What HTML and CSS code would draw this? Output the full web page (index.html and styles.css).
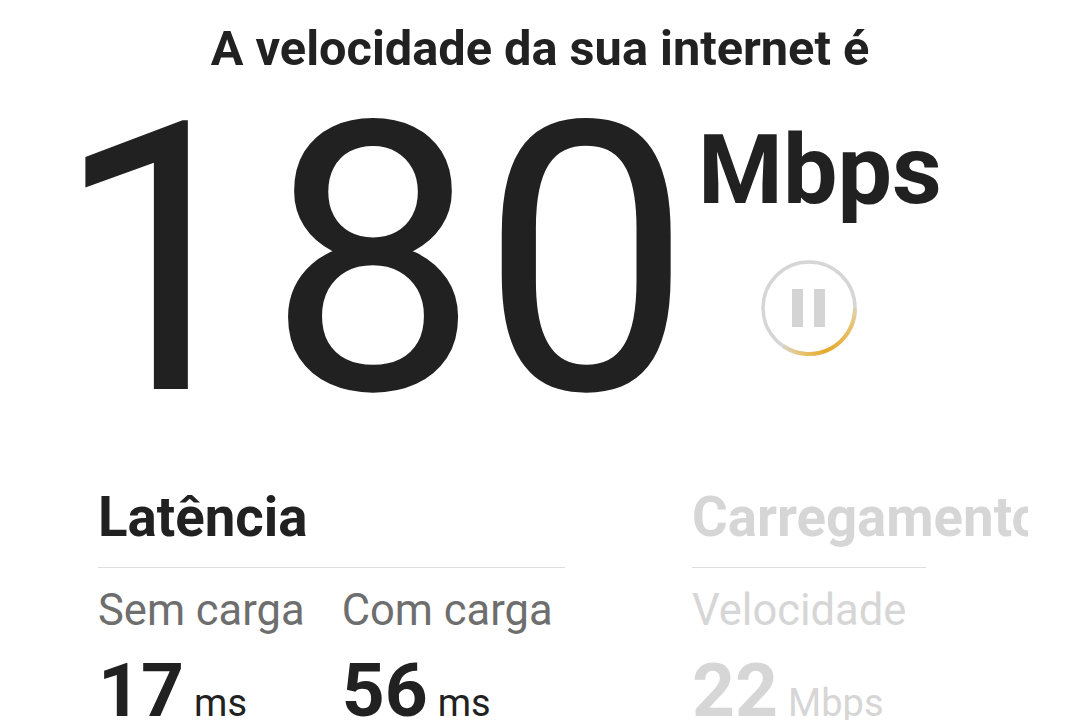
FILE: index.html
```html
<!DOCTYPE html>
<html lang="pt">
<head>
    <meta charset="UTF-8">
    <title>Velocidade da internet</title>
    <link rel="stylesheet" href="styles.css">
</head>
<body>
    <h1 class="title">A velocidade da sua internet é</h1>
    <div class="speed">
        <div class="speed-value">180</div>
        <div class="speed-side">
            <div class="speed-unit">Mbps</div>
            <svg class="pause" width="100" height="100" viewBox="0 0 100 100">
                <defs>
                    <linearGradient id="arc" gradientUnits="userSpaceOnUse" x1="97" y1="40" x2="22" y2="90">
                        <stop offset="0" stop-color="#d9d9d9"/>
                        <stop offset="0.2" stop-color="#e8c470"/>
                        <stop offset="0.6" stop-color="#e5a928"/>
                        <stop offset="0.85" stop-color="#e8c470"/>
                        <stop offset="1" stop-color="#d6d6d6"/>
                    </linearGradient>
                </defs>
                <circle cx="50" cy="50" r="46" fill="none" stroke="#d6d6d6" stroke-width="3.5"/>
                <path d="M96 50A46 46 0 0 1 24 88" fill="none" stroke="url(#arc)" stroke-width="4"/>
                <rect x="33" y="31" width="11" height="38" fill="#d4d4d4"/>
                <rect x="55" y="31" width="11" height="38" fill="#d4d4d4"/>
            </svg>
        </div>
    </div>
    <div class="stats">
        <div class="group latency">
            <h2>Latência</h2>
            <div class="cols">
                <div class="col">
                    <div class="label">Sem carga</div>
                    <div class="num">17<span>ms</span></div>
                </div>
                <div class="col">
                    <div class="label">Com carga</div>
                    <div class="num">56<span>ms</span></div>
                </div>
            </div>
        </div>
        <div class="group upload">
            <h2>Carregamento</h2>
            <div class="cols">
                <div class="col">
                    <div class="label">Velocidade</div>
                    <div class="num">22<span>Mbps</span></div>
                </div>
            </div>
        </div>
    </div>
</body>
</html>
```
FILE: styles.css
```css
html, body {
    margin: 0;
    height: 720px;
    overflow: hidden;
}
body {
    font-family: Roboto, sans-serif;
    background-color: #fff;
    color: #212121;
}
.title {
    margin: 0;
    padding-top: 23px;
    text-align: center;
    font-size: 48.7px;
    line-height: 52px;
    font-weight: 700;
}
.speed {
    display: flex;
    padding-left: 54px;
    height: 358px;
}
.speed-value {
    font-size: 376px;
    line-height: 360px;
    font-weight: 400;
    letter-spacing: 2px;
    margin-top: 6px;
    width: 644px;
    flex: none;
}
.speed-side {
    display: flex;
    flex-direction: column;
    padding-top: 42px;
}
.speed-unit {
    font-size: 97px;
    line-height: 110px;
    font-weight: 700;
    margin-top: -2px;
}
.pause {
    margin: 33px 0 0 61px;
}
.stats {
    display: flex;
    padding-left: 98px;
    gap: 127px;
    margin-top: 52px;
}
.group {
    flex: none;
}
.latency {
    width: 467px;
}
.upload {
    width: 336px;
    overflow: hidden;
    color: #d6d6d6;
}
.group h2 {
    margin: 0;
    font-size: 54.6px;
    line-height: 64px;
    font-weight: 700;
    white-space: nowrap;
    padding-bottom: 18px;
}
.cols {
    display: flex;
    gap: 37px;
    border-top: 1px solid #dedede;
    padding-top: 17px;
}
.upload .cols {
    width: 234px;
}
.label {
    font-size: 43.5px;
    line-height: 52px;
    color: #6e6e6e;
    white-space: nowrap;
}
.upload .label {
    color: #d6d6d6;
}
.num {
    font-size: 75px;
    line-height: 90px;
    font-weight: 700;
    white-space: nowrap;
    margin-top: 8px;
}
.num span {
    font-size: 38px;
    font-weight: 400;
    margin-left: 10px;
}
```
